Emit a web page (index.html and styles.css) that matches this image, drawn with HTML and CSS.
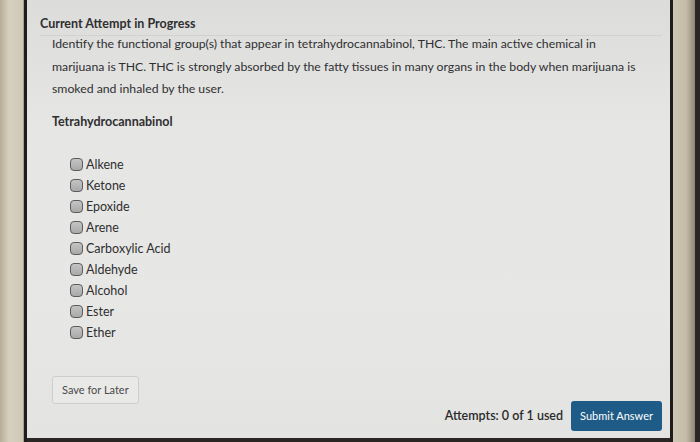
FILE: index.html
```html
<!DOCTYPE html>
<html>
<head>
<meta charset="utf-8">
<link rel="stylesheet" href="styles.css">
</head>
<body>
<div class="frame">
  <div class="bezel-left"></div>
  <div class="edge"></div>
  <div class="screen">
    <div class="header">Current Attempt in Progress</div>
    <div class="content">
      <p class="question">Identify the functional group(s) that appear in tetrahydrocannabinol, THC. The main active chemical in marijuana is THC. THC is strongly absorbed by the fatty tissues in many organs in the body when marijuana is smoked and inhaled by the user.</p>
      <p class="subtitle">Tetrahydrocannabinol</p>
      <ul class="options">
        <li><span class="box"></span>Alkene</li>
        <li><span class="box"></span>Ketone</li>
        <li><span class="box"></span>Epoxide</li>
        <li><span class="box"></span>Arene</li>
        <li><span class="box"></span>Carboxylic Acid</li>
        <li><span class="box"></span>Aldehyde</li>
        <li><span class="box"></span>Alcohol</li>
        <li><span class="box"></span>Ester</li>
        <li><span class="box"></span>Ether</li>
      </ul>
      <div class="save-row"><button class="save">Save for Later</button></div>
      <div class="submit-row">
        <span class="attempts">Attempts: 0 of 1 used</span>
        <button class="submit">Submit Answer</button>
      </div>
    </div>
  </div>
  <div class="edge"></div>
  <div class="bezel-right"></div>
</div>
</body>
</html>
```
FILE: styles.css
```css
html, body {
  margin: 0;
  padding: 0;
  width: 700px;
  height: 442px;
  overflow: hidden;
  background: #2a2624;
}
.frame {
  display: flex;
  width: 700px;
  height: 442px;
  font-family: Lato, "Open Sans", sans-serif;
  color: #2f2f30;
}
.bezel-left {
  width: 23px;
  background: linear-gradient(to right, #b7ad98, #d6d0bf 40%, #cfc8b6);
  border-right: 1px solid #a9a08d;
}
.bezel-right {
  width: 22px;
  background: linear-gradient(to right, #cdc6b4, #c4bca8 60%, #8e8576);
}
.edge {
  width: 3px;
  background: #1f1c1b;
}
.screen {
  width: 643px;
  height: 438px;
  background: linear-gradient(to bottom, #dcdcdb, #e6e6e5 30%, #e7e7e6 70%, #e3e3e2);
  box-sizing: border-box;
  padding: 16px 8px 0 13px;
  display: flex;
  flex-direction: column;
}
.header {
  font-weight: bold;
  font-size: 12.5px;
  line-height: 16px;
  padding-bottom: 3px;
  border-bottom: 1px solid #d2d2d2;
}
.content {
  padding: 0 0 0 12px;
  flex: 1;
  display: flex;
  flex-direction: column;
}
.question {
  margin: -3px 0 0 0;
  font-size: 12.25px;
  line-height: 22.5px;
  width: 590px;
}
.subtitle {
  margin: 11px 0 0 0;
  font-weight: bold;
  font-size: 12.5px;
  line-height: 20px;
}
.options {
  list-style: none;
  margin: 22px 0 0 0;
  padding: 0 0 0 18px;
}
.options li {
  display: flex;
  align-items: center;
  height: 21px;
  font-size: 12.5px;
}
.box {
  width: 11px;
  height: 11px;
  border: 1.5px solid #5c5c5c;
  border-radius: 4px;
  background: linear-gradient(to bottom, #c4c4c4, #a9a9a9);
  margin-right: 3px;
  flex: none;
}
.save-row {
  margin-top: 33px;
}
.save {
  font-family: Lato, "Open Sans", sans-serif;
  font-size: 11px;
  color: #4a4a4a;
  background: #e9e9e8;
  border: 1px solid #cdcdcd;
  border-radius: 3px;
  height: 28px;
  padding: 0 9px;
}
.submit-row {
  display: flex;
  justify-content: flex-end;
  align-items: center;
  gap: 8px;
  margin-top: -3px;
}
.attempts {
  font-size: 12.5px;
  font-weight: 600;
  color: #2a2a2a;
}
.submit {
  font-family: Lato, "Open Sans", sans-serif;
  font-size: 11px;
  color: #ffffff;
  background: #1e5b86;
  border: none;
  border-radius: 3px;
  height: 30px;
  padding: 0 9px;
}
```
